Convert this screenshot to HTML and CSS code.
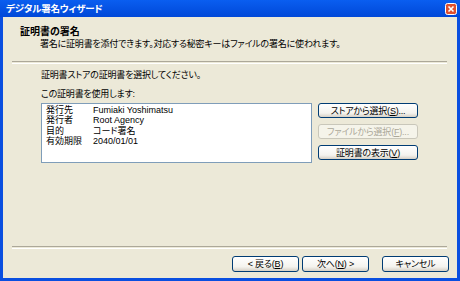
FILE: index.html
```html
<!DOCTYPE html>
<html lang="ja">
<head>
    <meta charset="UTF-8">
    <title>デジタル署名ウィザード</title>
    <link rel="stylesheet" href="styles.css">
</head>
<body>
    <div class="window">
        <div class="titlebar">
            <span class="title">デジタル署名ウィザード</span>
            <svg class="close" width="12" height="12" viewBox="0 0 12 12">
                <rect x="0.5" y="0.5" width="11" height="11" rx="2" fill="#e0502f" stroke="#fff"/>
                <path d="M3.5 3.5 L8.5 8.5 M8.5 3.5 L3.5 8.5" stroke="#fff" stroke-width="1.6"/>
            </svg>
        </div>

        <div class="frame">
            <div class="header">
                <div class="header-title">証明書の署名</div>
                <div class="header-sub">署名に証明書を添付できます。対応する秘密キーはファイルの署名に使われます。</div>
            </div>
            <div class="sep"></div>

            <div class="content">
                <p class="intro">証明書ストアの証明書を選択してください。</p>
                <p class="label">この証明書を使用します:</p>
                <div class="pick">
                    <div class="listbox">
                        <span>発行先</span><span>Fumiaki Yoshimatsu</span>
                        <span>発行者</span><span>Root Agency</span>
                        <span>目的</span><span>コード署名</span>
                        <span>有効期限</span><span>2040/01/01</span>
                    </div>
                    <div class="side">
                        <button class="btn side-btn">ストアから選択(<u>S</u>)...</button>
                        <button class="btn side-btn" disabled>ファイルから選択(<u>F</u>)...</button>
                        <button class="btn side-btn">証明書の表示(<u>V</u>)</button>
                    </div>
                </div>
            </div>

            <div class="sep"></div>
            <div class="footer">
                <button class="btn nav-btn">&lt; 戻る(<u>B</u>)</button>
                <button class="btn nav-btn">次へ(<u>N</u>) &gt;</button>
                <button class="btn nav-btn cancel">キャンセル</button>
            </div>
        </div>
    </div>
</body>
</html>
```

FILE: styles.css
```css
body {
    margin: 0;
    padding: 0;
    font-family: 'Liberation Sans', 'Noto Sans CJK JP', sans-serif;
    font-size: 9px;
    font-feature-settings: "palt";
    letter-spacing: -0.2px;
    color: #000;
}

.window {
    width: 460px;
    height: 281px;
    display: flex;
    flex-direction: column;
    background-color: #0a4fe0;
}

.titlebar {
    height: 17px;
    display: flex;
    align-items: center;
    justify-content: space-between;
    padding: 0 3px 0 6px;
    background: linear-gradient(#0a5ef0, #0048d8);
}

.title {
    color: #fff;
    font-weight: bold;
    font-size: 9.5px;
    line-height: 17px;
}

.close {
    display: block;
    margin-top: 1px;
}

.frame {
    flex: 1;
    margin: 0 3px 3px 3px;
    background-color: #ece9d8;
    display: flex;
    flex-direction: column;
}

.header {
    height: 44px;
    padding: 9px 0 0 17px;
    box-sizing: border-box;
}

.header-title {
    font-weight: bold;
    font-size: 10px;
    letter-spacing: 0;
    line-height: 12px;
}

.header-sub {
    padding-left: 20px;
    line-height: 12px;
}

.sep {
    height: 1px;
    margin: 0 10px 0 9px;
    border-top: 1px solid #aca899;
    border-bottom: 1px solid #fff;
}

.content {
    height: 182px;
    padding-left: 38px;
    box-sizing: border-box;
}

.intro {
    margin: 5px 0 0 0;
    line-height: 12px;
}

.label {
    margin: 7px 0 0 0;
    line-height: 12px;
}

.pick {
    display: flex;
    margin-top: 3px;
}

.listbox {
    width: 271px;
    height: 60px;
    box-sizing: border-box;
    background-color: #fff;
    border: 1px solid #7f9db9;
    padding: 1px 0 0 4px;
    display: grid;
    grid-template-columns: 47px 1fr;
    grid-auto-rows: 10.3px;
    align-content: start;
    line-height: 10.3px;
    letter-spacing: 0;
}

.side {
    display: flex;
    flex-direction: column;
    gap: 6px;
    margin-left: 6px;
}

.btn {
    font-family: inherit;
    font-size: 9px;
    font-feature-settings: "palt";
    letter-spacing: -0.2px;
    color: #000;
    padding: 0;
    line-height: 12px;
    border: 1px solid #003c74;
    border-radius: 3px;
    background: linear-gradient(#fff, #f4f3ee 70%, #d6d0c5);
}

.btn u {
    text-decoration-thickness: 1px;
}

.btn:disabled {
    color: #aca899;
    border-color: #c9c7ba;
    background: #f5f4ea;
}

.side-btn {
    width: 100px;
    height: 15px;
}

.footer {
    display: flex;
    padding: 7px 0 0 229px;
}

.nav-btn {
    width: 67px;
    height: 16px;
    margin-right: 3px;
}

.cancel {
    margin-left: 10px;
}
```
